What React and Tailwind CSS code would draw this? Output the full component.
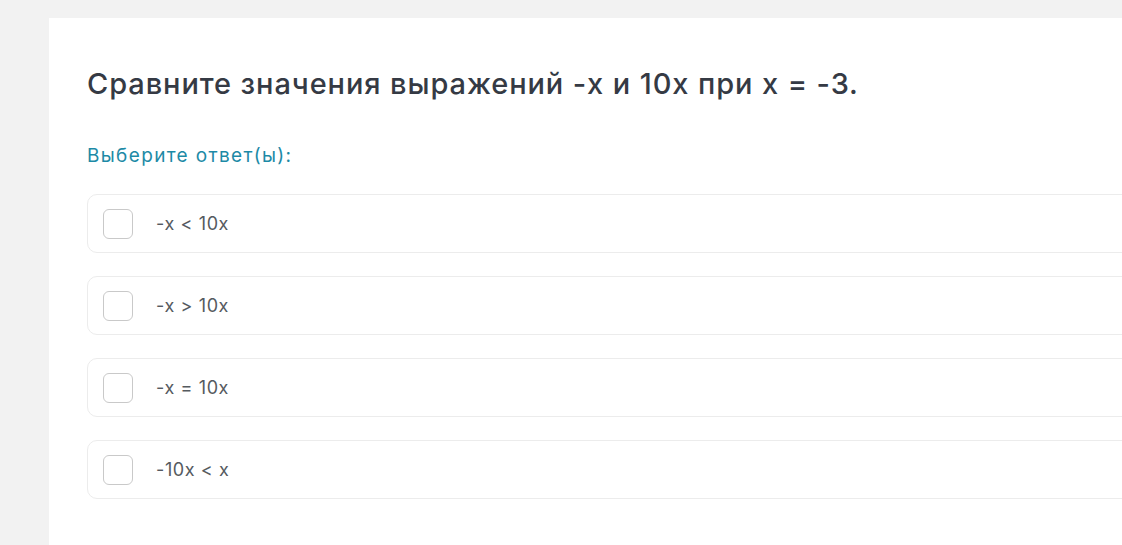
const options = ['-x < 10x', '-x > 10x', '-x = 10x', '-10x < x'];

function Option({ label }) {
  return (
    <label className="flex items-center h-[59px] rounded-[10px] border border-[#ececec] pl-[15px] cursor-pointer">
      <span className="w-[30px] h-[30px] rounded-[6px] border border-[#c9c9c9] bg-white shrink-0" />
      <span className="ml-[23px] text-[18px] text-[#555a60] tracking-[0.6px]">{label}</span>
    </label>
  );
}

export default function App() {
  return (
    <div className="min-h-[545px] bg-[#f2f2f2] pt-[18px] pl-[49px] overflow-hidden" style={{ fontFamily: 'Inter, "Open Sans", sans-serif' }}>
      <div className="bg-white w-[1120px] h-[540px] pl-[38px] pt-[47px]">
        <h1 className="text-[29px] leading-[38px] font-medium text-[#353a44] tracking-[0.9px]">
          Сравните значения выражений -x и 10x при x = -3.
        </h1>
        <p className="mt-[40px] text-[19px] leading-[26px] text-[#1d8aa6] tracking-[1.35px]">Выберите ответ(ы):</p>
        <div className="mt-[25px] flex flex-col gap-[23px]">
          {options.map((o) => (
            <Option key={o} label={o} />
          ))}
        </div>
      </div>
    </div>
  );
}
